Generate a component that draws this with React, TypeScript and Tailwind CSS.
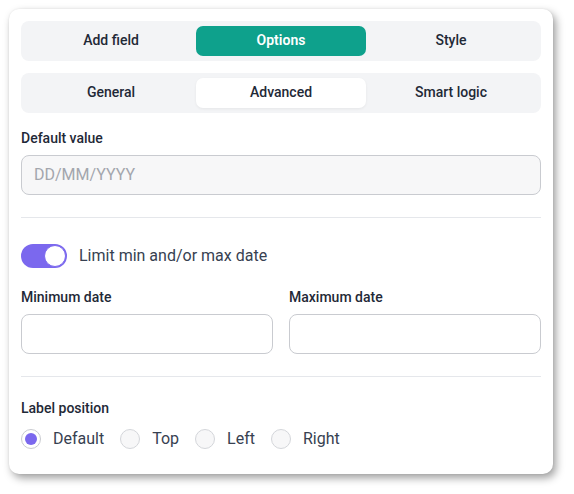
import React from "react";

function Tabs({ items, active, variant }: { items: string[]; active: number; variant: "teal" | "white" }) {
  return (
    <div className="grid grid-cols-3 rounded-lg bg-[#f3f4f6] p-[5px]">
      {items.map((t, i) => {
        const on = i === active;
        let cls = "flex h-[30px] items-center justify-center rounded-[7px] pb-px text-[14px] font-medium text-[#1f2937]";
        if (on && variant === "teal") cls = "flex h-[30px] items-center justify-center rounded-[7px] bg-[#0ea18c] pb-px text-[14px] font-semibold text-white";
        if (on && variant === "white") cls = "flex h-[30px] items-center justify-center rounded-[7px] bg-white pb-px text-[14px] font-medium text-[#1f2937] shadow-[0_1px_3px_rgba(0,0,0,0.06)]";
        return (
          <div key={t} className={cls}>
            {t}
          </div>
        );
      })}
    </div>
  );
}

function Radio({ label, checked }: { label: string; checked?: boolean }) {
  return (
    <div className="flex items-center gap-3">
      {checked ? (
        <span className="flex h-5 w-5 items-center justify-center rounded-full border border-[#c9cbd0] bg-white">
          <span className="h-3 w-3 rounded-full bg-[#7b68ee]" />
        </span>
      ) : (
        <span className="h-5 w-5 rounded-full border border-[#d4d6da] bg-[#f7f7f8]" />
      )}
      <span className="text-[16px] text-[#374151]">{label}</span>
    </div>
  );
}

export default function App() {
  return (
    <div className="min-h-screen bg-white p-[9px]" style={{ fontFamily: "Roboto, 'Noto Sans', sans-serif" }}>
      <div className="w-[544px] rounded-[10px] bg-white px-3 pt-3 pb-[23px] shadow-[3px_4px_8px_rgba(0,0,0,0.38),0_0_2px_rgba(0,0,0,0.08)]">
        <Tabs items={["Add field", "Options", "Style"]} active={1} variant="teal" />
        <div className="mt-3">
          <Tabs items={["General", "Advanced", "Smart logic"]} active={1} variant="white" />
        </div>

        <div className="mt-[15px] text-[14px] font-medium leading-5 text-[#1f2937]">Default value</div>
        <div className="mt-[7px] flex h-10 items-center rounded-lg border border-[#c9cbd0] bg-[#f7f7f8] px-3 text-[16px] text-[#a3a6ad]">
          DD/MM/YYYY
        </div>

        <div className="mt-[22px] h-px bg-[#e5e7eb]" />

        <div className="mt-[26px] flex items-center gap-3">
          <div className="flex h-6 w-[46px] items-center justify-end rounded-full bg-[#7b68ee] p-px">
            <span className="h-[22px] w-[22px] rounded-full border-[1.5px] border-[#7b68ee] bg-white" />
          </div>
          <span className="text-[16px] text-[#374151]">Limit min and/or max date</span>
        </div>

        <div className="mt-[19px] grid grid-cols-2 gap-4">
          <div>
            <div className="text-[14px] font-medium leading-5 text-[#1f2937]">Minimum date</div>
            <div className="mt-[7px] h-10 rounded-lg border border-[#c9cbd0] bg-white" />
          </div>
          <div>
            <div className="text-[14px] font-medium leading-5 text-[#1f2937]">Maximum date</div>
            <div className="mt-[7px] h-10 rounded-lg border border-[#c9cbd0] bg-white" />
          </div>
        </div>

        <div className="mt-[22px] h-px bg-[#e5e7eb]" />

        <div className="mt-[21px] text-[14px] font-medium leading-5 text-[#1f2937]">Label position</div>
        <div className="mt-[9px] flex items-center gap-4">
          <Radio label="Default" checked />
          <Radio label="Top" />
          <Radio label="Left" />
          <Radio label="Right" />
        </div>
      </div>
    </div>
  );
}
